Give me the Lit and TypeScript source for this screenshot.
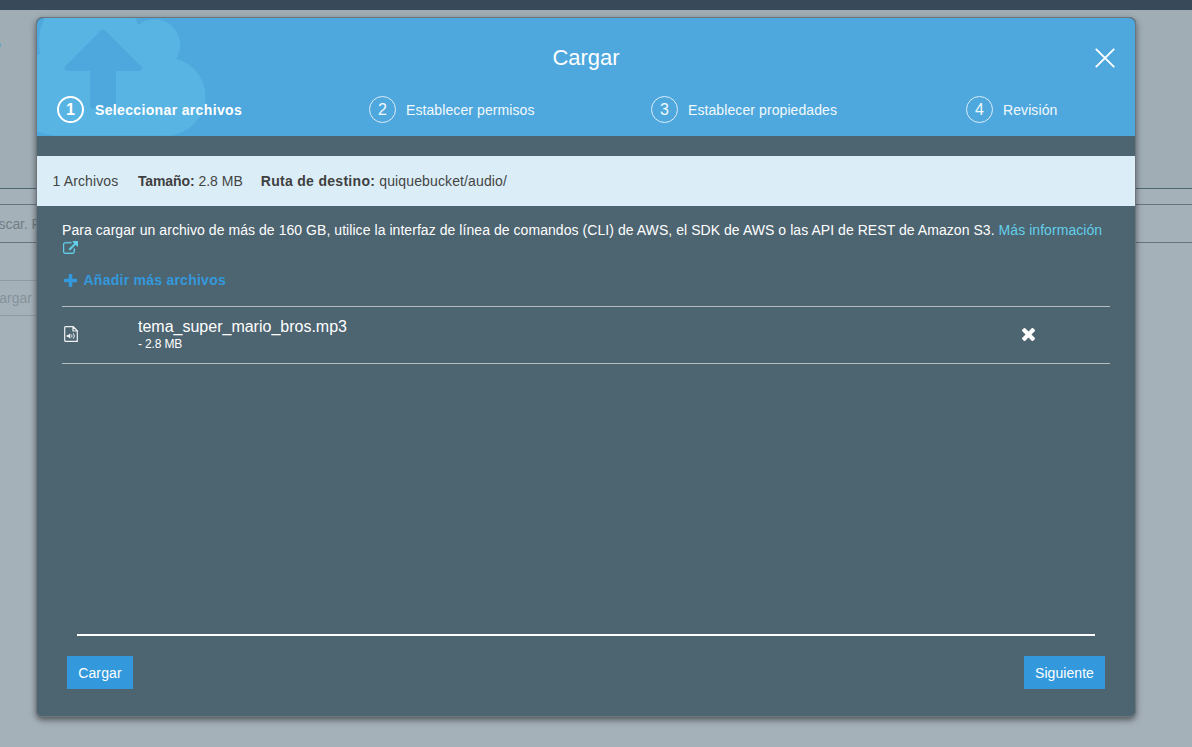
import { LitElement, html, css, svg } from "lit";
import { customElement } from "lit/decorators.js";
import { classMap } from "lit/directives/class-map.js";

const externalLink = svg`<path d="M1408 928v320q0 119-84.5 203.5t-203.5 84.5h-832q-119 0-203.5-84.5t-84.5-203.5v-832q0-119 84.5-203.5t203.5-84.5h704q14 0 23 9t9 23v64q0 14-9 23t-23 9h-704q-66 0-113 47t-47 113v832q0 66 47 113t113 47h832q66 0 113-47t47-113v-320q0-14 9-23t23-9h64q14 0 23 9t9 23zM1792 64v512q0 26-19 45t-45 19-45-19l-176-176-652 652q-10 10-23 10t-23-10l-114-114q-10-10-10-23t10-23l652-652-176-176q-19-19-19-45t19-45 45-19h512q26 0 45 19t19 45z"/>`;
const plus = svg`<path d="M1600 736v192q0 40-28 68t-68 28h-416v416q0 40-28 68t-68 28h-192q-40 0-68-28t-28-68v-416h-416q-40 0-68-28t-28-68v-192q0-40 28-68t68-28h416v-416q0-40 28-68t68-28h192q40 0 68 28t28 68v416h416q40 0 68 28t28 68z"/>`;
const times = svg`<path d="M1490 1322q0 40-28 68l-136 136q-28 28-68 28t-68-28l-294-294-294 294q-28 28-68 28t-68-28l-136-136q-28-28-28-68t28-68l294-294-294-294q-28-28-28-68t28-68l136-136q28-28 68-28t68 28l294 294 294-294q28-28 68-28t68 28l136 136q28 28 28 68t-28 68l-294 294 294 294q28 28 28 68z"/>`;

@customElement("upload-dialog")
class UploadDialog extends LitElement {
  steps = ["Seleccionar archivos", "Establecer permisos", "Establecer propiedades", "Revisión"];

  static styles = css`
    :host { display: flex; flex-direction: column; box-sizing: border-box; width: 1100px; height: 700px;
      border: 1px solid #6d757d; border-radius: 6px; background: #4d6471; color: #fff;
      box-shadow: 0 3px 6px rgba(0, 0, 0, .5); }
    * { box-sizing: border-box; }
    svg { display: block; flex: none; }
    .header { height: 118px; background: #4ea8dd; position: relative; flex: none; border-radius: 6px 6px 0 0; overflow: hidden; }
    .cloud { position: absolute; left: 0; top: 0; }
    .header-content { position: relative; }
    .titlebar { display: grid; grid-template-columns: 1fr auto 1fr; align-items: center; height: 78px; padding: 2px 20px 0; }
    .title { grid-column: 2; font-size: 22px; line-height: 26px; }
    .close { justify-self: end; }
    .steps { display: grid; grid-template-columns: 312px 282px 315px auto; padding-left: 20px; }
    .step { display: flex; align-items: center; height: 27px; gap: 10px; font-size: 14px; color: #f2f9fd; letter-spacing: .09px; }
    .num { width: 27px; height: 27px; border: 1px solid #dceef9; border-radius: 50%; display: flex; align-items: center; justify-content: center; font-size: 16px; padding-top: 1px; letter-spacing: 0; }
    .active { font-weight: bold; letter-spacing: .35px; color: #fff; gap: 11px; }
    .active .num { border: 2px solid #fff; }
    .summary { margin-top: 20px; height: 50px; flex: none; background: #dbeef8; color: #444; display: flex; align-items: center; gap: 19.5px; padding-left: 15.5px; font-size: 14px; letter-spacing: .13px; }
    .size-total { letter-spacing: 0; margin-right: -1.5px; }
    .summary b { letter-spacing: .3px; color: #3f3f3f; }
    .summary .tight { letter-spacing: -.1px; }
    .body { padding: 16px 25px 0; flex: 1; }
    .note { font-size: 14px; line-height: 17px; letter-spacing: .056px; white-space: nowrap; }
    .link { color: #63d0ea; }
    .ext { margin: 2px 0 0 1px; fill: #63d0ea; stroke: #63d0ea; stroke-width: 40px; }
    .add { display: flex; align-items: center; gap: 6.5px; margin-top: 16px; padding-left: 2px; height: 20px; color: #3399dc; font-weight: bold; font-size: 14px; letter-spacing: .25px; fill: #3399dc; }
    .file { display: flex; align-items: center; height: 58px; margin-top: 16px; padding-bottom: 2px; border-top: 1px solid #b6bcbf; border-bottom: 1px solid #b6bcbf; }
    .file-icon { margin: 0 60px 0 2px; }
    .file-text { width: 883.5px; padding-top: 2px; }
    .name { font-size: 16px; line-height: 19px; }
    .size { font-size: 12px; line-height: 17px; letter-spacing: -.15px; }
    .remove { fill: #fff; }
    .footer { margin: 0 30px; height: 82px; display: flex; flex-direction: column; }
    .rule { height: 2px; background: #fff; margin: 0 10px 20px; flex: none; }
    .actions { display: flex; justify-content: space-between; }
    .btn { border: 0; width: 66px; padding: 1px 0 0; height: 33px; background: #3399dc; color: #fff; font: 14px/32px "Liberation Sans", Arial, sans-serif; letter-spacing: .13px; text-align: center; }
    .next { width: 81px; letter-spacing: .06px; }
  `;

  render() {
    return html`
      <div class="header">
        <svg class="cloud" width="180" height="118" viewBox="37 18 180 118">
          <g fill="#58b4e3">
            <circle cx="90" cy="42" r="51"/><circle cx="154.500" cy="45" r="25.700"/>
            <circle cx="166.500" cy="96.500" r="39"/><circle cx="55" cy="93" r="42.300"/>
            <path d="M55 50H137L172 64V135.400H55Z"/>
          </g>
          <path fill="#4ea8dd" d="M101 30.200Q103 28.300 105 30.200L140.800 66Q143.500 69.200 140 71H116V106Q116 109 113 109H93Q90 109 90 106V71H67Q63 69.500 65.500 66Z"/>
        </svg>
        <div class="header-content">
          <div class="titlebar">
            <div class="title">Cargar</div>
            <svg class="close" width="20" height="20" viewBox="0 0 20 20"><path d="M.8.800 19.200 19.200M19.200.800.8 19.200" stroke="#fff" stroke-width="1.900"/></svg>
          </div>
          <div class="steps">
            ${this.steps.map((s, i) => html`<div class=${classMap({ step: true, active: i === 0 })}><span class="num">${i + 1}</span><span>${s}</span></div>`)}
          </div>
        </div>
      </div>
      <div class="summary"><span>1 Archivos</span><span class="size-total"><b class="tight">Tamaño:</b> 2.8 MB</span><span><b>Ruta de destino:</b> quiquebucket/audio/</span></div>
      <div class="body">
        <div class="note">Para cargar un archivo de más de 160 GB, utilice la interfaz de línea de comandos (CLI) de AWS, el SDK de AWS o las API de REST de Amazon S3. <span class="link">Más información</span></div>
        <svg class="ext" width="15" height="13" viewBox="0 0 1792 1536">${externalLink}</svg>
        <div class="add"><svg width="13" height="13" viewBox="192 128 1408 1408">${plus}</svg><span>Añadir más archivos</span></div>
        <div class="file">
          <svg class="file-icon" width="14" height="16" viewBox="0 0 14 16" fill="none" stroke="#eef2f4">
            <path d="M1.400.700H9.200L13.300 4.700V15.300H1.400Q.7 15.300.7 14.600V1.400Q.7.700 1.400.700ZM9 .7V5H13.300" stroke-width="1.200"/>
            <path d="M2.700 9H4.200L6.300 7.200V12.800L4.200 11H2.700Z" fill="#eef2f4" stroke="none"/>
            <path d="M7.500 8.600Q8.700 10 7.500 11.400M9.300 7.300Q11.500 10 9.300 12.700" stroke-width="1"/>
          </svg>
          <div class="file-text"><div class="name">tema_super_mario_bros.mp3</div><div class="size">- 2.8 MB</div></div>
          <svg class="remove" width="13" height="13" viewBox="302 366 1188 1188">${times}</svg>
        </div>
      </div>
      <div class="footer">
        <div class="rule"></div>
        <div class="actions"><button class="btn">Cargar</button><button class="btn next">Siguiente</button></div>
      </div>`;
  }
}

@customElement("app-root")
class AppRoot extends LitElement {
  static styles = css`
    :host { display: block; position: relative; width: 1192px; height: 747px; overflow: hidden; background: #a5b1b9; font-family: "Liberation Sans", Arial, sans-serif; }
    * { box-sizing: border-box; }
    .topbar { height: 10px; background: #384a5a; }
    .banner { height: 179px; background: #a0adb5; border-bottom: 1px solid #4d6873; padding-top: 33px; }
    .dot { width: 1px; height: 4px; background: #6ba6c0; }
    .search { margin-top: 15px; height: 39px; border: solid #66747e; border-width: 1px 0; color: #727d84; font-size: 14px; line-height: 38px; }
    .search span { display: block; margin-left: -1.4px; letter-spacing: -.1px; white-space: nowrap; }
    .upload { margin-top: 37px; width: 37px; height: 36px; border: solid #8e9ba4; border-width: 1px 0; color: #84919a; font-size: 14px; line-height: 34px; text-indent: -.7px; }
    upload-dialog { position: absolute; left: 36px; top: 17px; }
  `;

  render() {
    return html`
      <div class="topbar"></div>
      <div class="banner"><div class="dot"></div></div>
      <div class="search"><span>scar. P</span></div>
      <div class="upload">argar</div>
      <upload-dialog></upload-dialog>`;
  }
}
